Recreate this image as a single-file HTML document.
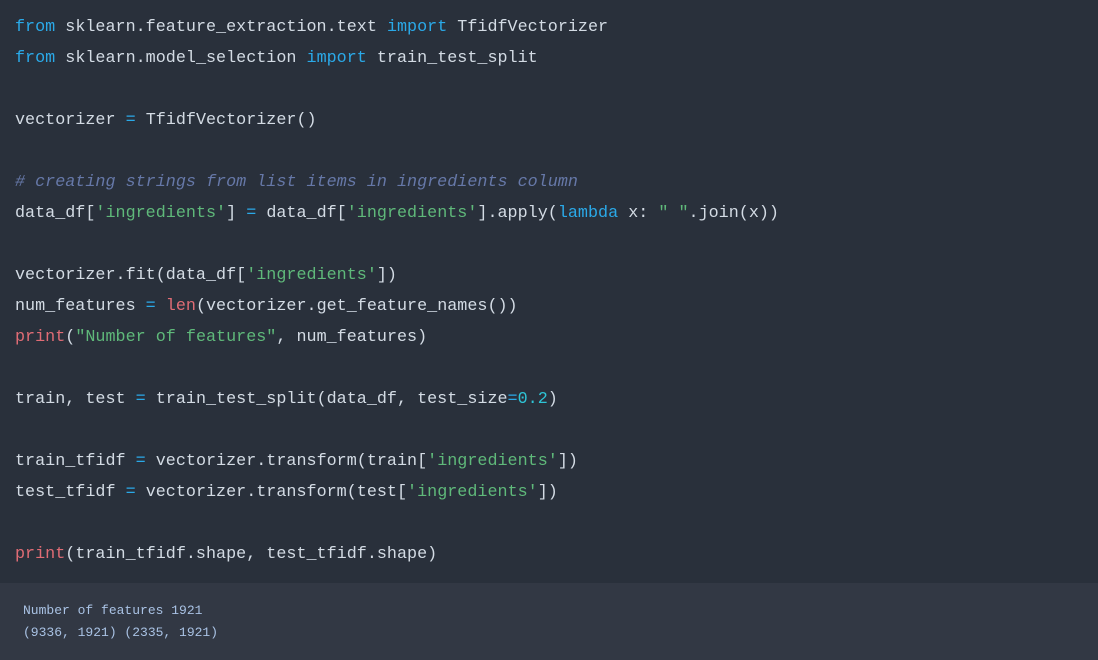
<!DOCTYPE html>
<html><head><style>
body{margin:0;width:1098px;height:660px;background:#29303b;overflow:hidden}
pre{margin:0;font-family:"Liberation Mono",monospace;}
.code{position:absolute;left:15px;top:12px;font-size:16.75px;line-height:31px;color:#d3dbe4}
.k{color:#2aa9e8}.s{color:#5fb97a}.c{color:#6678a8;font-style:italic}.f{color:#e06c75}.n{color:#2ec4d6}
.out{position:absolute;left:0;top:583px;width:1098px;height:77px;background:#323844}
.out pre{position:absolute;left:23px;top:17px;font-size:13px;line-height:22px;color:#a9c2e4}
</style></head><body>
<pre class="code"><span class="k">from</span> sklearn.feature_extraction.text <span class="k">import</span> TfidfVectorizer
<span class="k">from</span> sklearn.model_selection <span class="k">import</span> train_test_split

vectorizer <span class="k">=</span> TfidfVectorizer()

<span class="c"># creating strings from list items in ingredients column</span>
data_df[<span class="s">'ingredients'</span>] <span class="k">=</span> data_df[<span class="s">'ingredients'</span>].apply(<span class="k">lambda</span> x: <span class="s">" "</span>.join(x))

vectorizer.fit(data_df[<span class="s">'ingredients'</span>])
num_features <span class="k">=</span> <span class="f">len</span>(vectorizer.get_feature_names())
<span class="f">print</span>(<span class="s">"Number of features"</span>, num_features)

train, test <span class="k">=</span> train_test_split(data_df, test_size<span class="k">=</span><span class="n">0.2</span>)

train_tfidf <span class="k">=</span> vectorizer.transform(train[<span class="s">'ingredients'</span>])
test_tfidf <span class="k">=</span> vectorizer.transform(test[<span class="s">'ingredients'</span>])

<span class="f">print</span>(train_tfidf.shape, test_tfidf.shape)</pre>
<div class="out"><pre>Number of features 1921
(9336, 1921) (2335, 1921)</pre></div>
</body></html>
